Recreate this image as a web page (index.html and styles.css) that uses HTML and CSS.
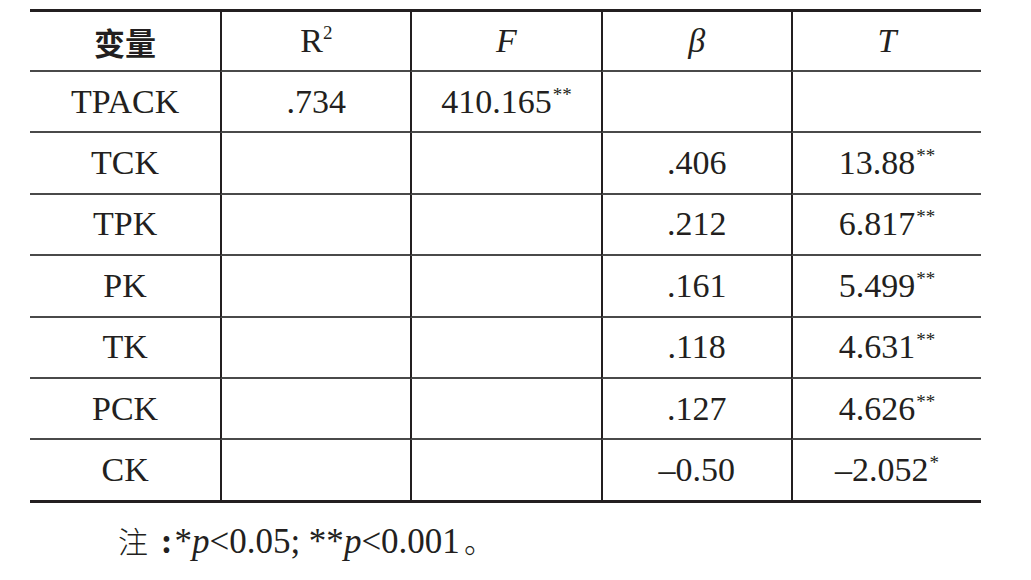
FILE: index.html
```html
<!DOCTYPE html>
<html lang="zh-CN">
<head>
  <meta charset="UTF-8">
  <title>回归分析</title>
  <link rel="stylesheet" href="styles.css">
</head>
<body>
  <table class="stats">
    <colgroup>
      <col><col><col><col><col>
    </colgroup>
    <thead>
      <tr>
        <th class="cjk">变量</th>
        <th>R<sup class="pow">2</sup></th>
        <th><i>F</i></th>
        <th><i>β</i></th>
        <th><i>T</i></th>
      </tr>
    </thead>
    <tbody>
      <tr>
        <td>TPACK</td>
        <td>.734</td>
        <td>410.165<sup class="sig">**</sup></td>
        <td></td>
        <td></td>
      </tr>
      <tr>
        <td>TCK</td>
        <td></td>
        <td></td>
        <td>.406</td>
        <td>13.88<sup class="sig">**</sup></td>
      </tr>
      <tr>
        <td>TPK</td>
        <td></td>
        <td></td>
        <td>.212</td>
        <td>6.817<sup class="sig">**</sup></td>
      </tr>
      <tr>
        <td>PK</td>
        <td></td>
        <td></td>
        <td>.161</td>
        <td>5.499<sup class="sig">**</sup></td>
      </tr>
      <tr>
        <td>TK</td>
        <td></td>
        <td></td>
        <td>.118</td>
        <td>4.631<sup class="sig">**</sup></td>
      </tr>
      <tr>
        <td>PCK</td>
        <td></td>
        <td></td>
        <td>.127</td>
        <td>4.626<sup class="sig">**</sup></td>
      </tr>
      <tr>
        <td>CK</td>
        <td></td>
        <td></td>
        <td>–0.50</td>
        <td>–2.052<sup class="sig">*</sup></td>
      </tr>
    </tbody>
  </table>

  <p class="note"><span class="cjk-note">注</span> <b>:</b>*<i>p</i>&lt;0.05; **<i>p</i>&lt;0.001<span class="cjk-note stop">。</span></p>
</body>
</html>
```

FILE: styles.css
```css
body {
  margin: 0;
  padding: 9px 0 0 30px;
  background-color: #ffffff;
  color: #231f20;
  font-family: "Liberation Serif", "Times New Roman", serif;
}

.stats {
  width: 951px;
  table-layout: fixed;
  border-collapse: separate;
  border-spacing: 0;
  border-top: 3px solid #231f20;
  border-bottom: 3px solid #231f20;
  font-size: 34px;
}

.stats th,
.stats td {
  padding: 0;
  height: 59.4px;
  text-align: center;
  vertical-align: middle;
  font-weight: normal;
  border-left: 2px solid #231f20;
  border-bottom: 2px solid #4a4a4a;
}

.stats th:first-child,
.stats td:first-child {
  border-left: none;
}

.stats tbody tr:last-child td {
  border-bottom: none;
}

.stats th {
  height: 58px;
}

.stats th.cjk {
  font-family: "Noto Sans CJK SC", sans-serif;
  font-weight: 700;
  font-size: 31px;
}

sup.pow {
  font-size: 19px;
  vertical-align: 13px;
  line-height: 0;
}

sup.sig {
  font-size: 19px;
  vertical-align: 12px;
  line-height: 0;
  margin-left: 1px;
}

.note {
  margin: 18px 0 0 88px;
  font-size: 35px;
  line-height: 1.2;
}

.note b {
  font-weight: 700;
  margin-left: 4px;
  margin-right: 2px;
}

.cjk-note {
  font-family: "Noto Sans CJK SC", sans-serif;
  font-weight: 300;
  font-size: 30px;
}

.cjk-note.stop {
  margin-left: 4px;
}
```
